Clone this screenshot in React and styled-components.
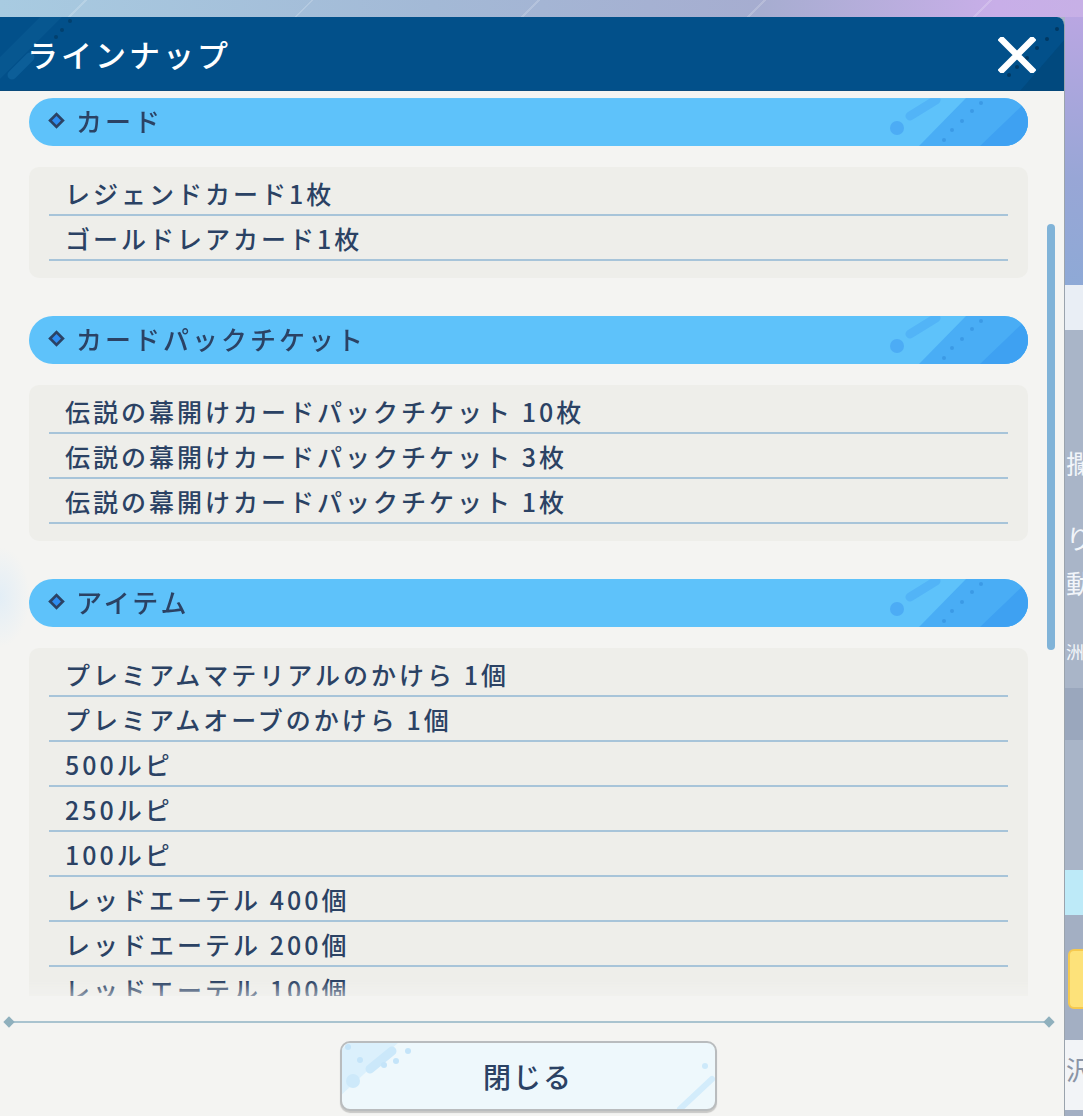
import React from 'react';
import styled, { createGlobalStyle } from 'styled-components';

const GlobalStyle = createGlobalStyle`
  html, body {
    margin: 0;
    padding: 0;
    overflow: hidden;
  }
  body {
    font-family: "Noto Sans CJK JP", "Noto Sans", sans-serif;
  }
  * {
    box-sizing: border-box;
  }
`;

const sections = [
  {
    title: 'カード',
    items: ['レジェンドカード1枚', 'ゴールドレアカード1枚'],
  },
  {
    title: 'カードパックチケット',
    items: [
      '伝説の幕開けカードパックチケット 10枚',
      '伝説の幕開けカードパックチケット 3枚',
      '伝説の幕開けカードパックチケット 1枚',
    ],
  },
  {
    title: 'アイテム',
    items: [
      'プレミアムマテリアルのかけら 1個',
      'プレミアムオーブのかけら 1個',
      '500ルピ',
      '250ルピ',
      '100ルピ',
      'レッドエーテル 400個',
      'レッドエーテル 200個',
      'レッドエーテル 100個',
    ],
  },
];

const Diamond = () => (
  <svg width="17" height="17" viewBox="0 0 16 16">
    <path d="M8 0.2 L15.8 8 L8 15.8 L0.2 8 Z" fill="#2b4264" />
    <path d="M8 3.8 L12.2 8 L8 12.2 L3.8 8 Z" fill="#2d8cf0" />
  </svg>
);

const PillDecor = () => (
  <PillArt width="140" height="48" viewBox="0 0 140 48">
    <polygon points="78,0 140,0 140,48 31,48" fill="#49adf5" />
    <polygon points="92,48 140,48 140,2" fill="#3ea1f2" />
    <circle cx="9" cy="30" r="7" fill="#4cacf5" />
    <line x1="22" y1="18" x2="48" y2="2" stroke="#52b4f7" strokeWidth="9" strokeLinecap="round" />
    {[[56, 42], [64, 32], [74, 23], [84, 13], [93, 5]].map(([x, y]) => (
      <circle key={x} cx={x} cy={y} r="2" fill="#3b9ae6" />
    ))}
  </PillArt>
);

const CloseIcon = () => (
  <svg width="38" height="36" viewBox="0 0 38 36">
    <path d="M4 3 L34 33 M34 3 L4 33" stroke="#ffffff" strokeWidth="6.5" strokeLinecap="square" />
  </svg>
);

const HeaderDecor = () => (
  <HeaderArt width="1065" height="74" viewBox="0 0 1065 74">
    <polygon points="0,40 40,0 62,0 0,62" fill="#0a5a93" opacity="0.7" />
    <line x1="12" y1="58" x2="30" y2="40" stroke="#0c5e98" strokeWidth="9" strokeLinecap="round" />
    {[[70, 4], [62, 13], [56, 20]].map(([x, y]) => (
      <circle key={x} cx={x} cy={y} r="2" fill="#02406e" />
    ))}
    <polygon points="1065,0 1065,74 1020,74 1065,22" fill="#024679" opacity="0.7" />
    {[[1057, 12], [1047, 22], [1037, 31], [1027, 41], [1017, 50], [1009, 58]].map(([x, y]) => (
      <circle key={x} cx={x} cy={y} r="2" fill="#013862" />
    ))}
  </HeaderArt>
);

const ButtonDecor = () => (
  <ButtonArt width="377" height="70" viewBox="0 0 377 70">
    <polygon points="0,10 10,0 60,0 0,55" fill="#d6eefb" opacity="0.8" />
    <line x1="30" y1="28" x2="52" y2="10" stroke="#cbe8fa" strokeWidth="9" strokeLinecap="round" />
    {[[8, 6], [20, 19], [44, 24], [56, 20], [68, 10]].map(([x, y]) => (
      <circle key={x} cx={x} cy={y} r="3" fill="#c4e4f9" />
    ))}
    <circle cx="13" cy="40" r="7" fill="#cde9fa" />
    <line x1="340" y1="68" x2="372" y2="38" stroke="#d3ecfb" strokeWidth="6" strokeLinecap="round" />
    <circle cx="365" cy="25" r="3" fill="#cde9fa" />
  </ButtonArt>
);

const Section = ({ title, items }) => (
  <SectionBlock>
    <SectionHeader>
      <Diamond />
      <SectionTitle>{title}</SectionTitle>
      <PillDecor />
    </SectionHeader>
    <ItemList>
      {items.map((item) => (
        <ItemRow key={item}>{item}</ItemRow>
      ))}
    </ItemList>
  </SectionBlock>
);

export default function App() {
  return (
    <Page>
      <GlobalStyle />
      <TopStrip />
      <Stage>
        <Panel>
          <Header>
            <HeaderDecor />
            <Title>ラインナップ</Title>
            <CloseButton aria-label="閉じる">
              <CloseIcon />
            </CloseButton>
          </Header>
          <Body>
            <Scroller>
              {sections.map((s) => (
                <Section key={s.title} {...s} />
              ))}
            </Scroller>
            <ScrollThumb />
          </Body>
          <Footer>
            <Divider>
              <DividerEnd />
              <DividerLine />
              <DividerEnd />
            </Divider>
            <CloseAction>
              <ButtonDecor />
              <span>閉じる</span>
            </CloseAction>
          </Footer>
        </Panel>
        <SideStrip>
          <SideBlock $h={268} $bg="linear-gradient(180deg, #b9a6e2 0%, #98a6d6 60%, #8ea9d6 100%)" />
          <SideBlock $h={45} $bg="#e9eef5" />
          <SideBlock $h={358} $bg="#a9b5c8">
            <SideText $top={120}>攔</SideText>
            <SideText $top={195}>り</SideText>
            <SideText $top={240}>動</SideText>
            <SideText $top={312} $size={18}>洲</SideText>
          </SideBlock>
          <SideBlock $h={52} $bg="#9aa7bd" />
          <SideBlock $h={130} $bg="#a9b5c8" />
          <SideBlock $h={45} $bg="#bdeaf8" />
          <SideBlock $h={125} $bg="#a3afc3">
            <YellowTab />
          </SideBlock>
          <SideBlock $h={70} $bg="#f2f4f7">
            <SideText $top={16} $color="#8b95a6">沢</SideText>
          </SideBlock>
          <SideBlock $h={20} $bg="#a3afc3" />
        </SideStrip>
      </Stage>
    </Page>
  );
}

const Page = styled.div`
  width: 1083px;
  height: 1116px;
  overflow: hidden;
  display: flex;
  flex-direction: column;
  background: #a9b5c8;
`;

const TopStrip = styled.div`
  height: 17px;
  flex: none;
  background:
    repeating-linear-gradient(135deg, transparent 0 60px, rgba(255, 255, 255, 0.18) 60px 62px, transparent 62px 160px),
    linear-gradient(90deg, #a8cbe1 0%, #a3b9d6 40%, #a6add0 70%, #c8aee8 92%, #c7b0e6 100%);
`;

const Stage = styled.div`
  flex: 1;
  display: flex;
  min-height: 0;
`;

const Panel = styled.div`
  width: 1065px;
  flex: none;
  display: flex;
  flex-direction: column;
  background:
    radial-gradient(ellipse 30px 50px at 0px 580px, rgba(210, 232, 250, 0.5), rgba(210, 232, 250, 0) 100%),
    #f4f4f2;
  border-top-right-radius: 8px;
  border-right: 1px solid #9aa3ad;
  overflow: hidden;
`;

const Header = styled.div`
  position: relative;
  height: 74px;
  flex: none;
  display: flex;
  align-items: center;
  justify-content: space-between;
  padding: 0 28px 0 27px;
  background: #02508a;
  border-bottom: 1px solid #0a4a7c;
`;

const HeaderArt = styled.svg`
  position: absolute;
  left: 0;
  top: 0;
`;

const Title = styled.h1`
  position: relative;
  margin: 0;
  font-size: 31px;
  font-weight: 500;
  letter-spacing: 3px;
  color: #ffffff;
`;

const CloseButton = styled.button`
  position: relative;
  border: none;
  background: none;
  padding: 0;
  display: flex;
  margin-top: 2px;
`;

const Body = styled.div`
  position: relative;
  height: 905px;
  flex: none;
`;

const Scroller = styled.div`
  height: 100%;
  overflow: hidden;
  padding: 7px 36px 0 29px;
  display: flex;
  flex-direction: column;
  gap: 38px;
  mask-image: linear-gradient(180deg, rgba(0, 0, 0, 0.5) 0px, #000 8px, #000 890px, rgba(0, 0, 0, 0.5) 905px);
`;

const ScrollThumb = styled.div`
  position: absolute;
  left: 1047px;
  top: 133px;
  width: 8px;
  height: 426px;
  border-radius: 4px;
  background: #80b3d8;
`;

const SectionBlock = styled.section`
  display: flex;
  flex-direction: column;
  gap: 21px;
  flex: none;
`;

const SectionHeader = styled.div`
  position: relative;
  height: 48px;
  border-radius: 24px;
  overflow: hidden;
  background: #5ec2fa;
  display: flex;
  align-items: center;
  gap: 11px;
  padding: 0 0 3px 19px;
`;

const SectionTitle = styled.h2`
  position: relative;
  z-index: 1;
  margin: 0;
  font-size: 26px;
  font-weight: 500;
  letter-spacing: 3px;
  color: #2b4264;
`;

const PillArt = styled.svg`
  position: absolute;
  right: 0;
  top: 0;
`;

const ItemList = styled.ul`
  list-style: none;
  margin: 0;
  padding: 4px 20px 17px;
  background: #eeeeea;
  border-radius: 10px;
`;

const ItemRow = styled.li`
  height: 45px;
  display: flex;
  align-items: center;
  padding: 0 0 0 16px;
  border-bottom: 2px solid #a7c4d9;
  font-size: 25px;
  font-weight: 500;
  letter-spacing: 3px;
  color: #2b4264;
  white-space: nowrap;
`;

const Footer = styled.div`
  flex: 1;
  display: flex;
  flex-direction: column;
  align-items: center;
  padding: 22px 8px 0 0;
`;

const Divider = styled.div`
  width: 100%;
  display: flex;
  align-items: center;
  padding: 0 3px 0 5px;
`;

const DividerEnd = styled.div`
  width: 8px;
  height: 8px;
  flex: none;
  background: #8fb0bd;
  transform: rotate(45deg);
`;

const DividerLine = styled.div`
  flex: 1;
  height: 2px;
  background: #a9c3cf;
`;

const CloseAction = styled.button`
  position: relative;
  margin-top: 15px;
  width: 377px;
  height: 70px;
  border: 2px solid #b9bcbe;
  border-radius: 10px;
  background: #eef8fc;
  box-shadow: 0 2px 1px rgba(0, 0, 0, 0.18);
  display: flex;
  align-items: center;
  justify-content: center;
  padding: 0;
  overflow: hidden;
  font-family: "Noto Sans CJK JP", "Noto Sans", sans-serif;
  font-size: 28px;
  font-weight: 500;
  letter-spacing: 2px;
  color: #2b4264;

  span {
    position: relative;
  }
`;

const ButtonArt = styled.svg`
  position: absolute;
  left: -2px;
  top: -2px;
`;

const SideStrip = styled.div`
  flex: 1;
  display: flex;
  flex-direction: column;
  overflow: hidden;
`;

const SideBlock = styled.div`
  position: relative;
  height: ${({ $h }) => $h}px;
  flex: none;
  background: ${({ $bg }) => $bg};
  overflow: hidden;
`;

const SideText = styled.span`
  position: absolute;
  left: 1px;
  top: ${({ $top }) => $top}px;
  font-size: ${({ $size }) => $size || 26}px;
  line-height: 1;
  color: ${({ $color }) => $color || '#f2f5fa'};
`;

const YellowTab = styled.div`
  position: absolute;
  left: 3px;
  top: 34px;
  width: 30px;
  height: 60px;
  border-radius: 6px;
  background: #fde27a;
  border: 2px solid #f6c94e;
`;
